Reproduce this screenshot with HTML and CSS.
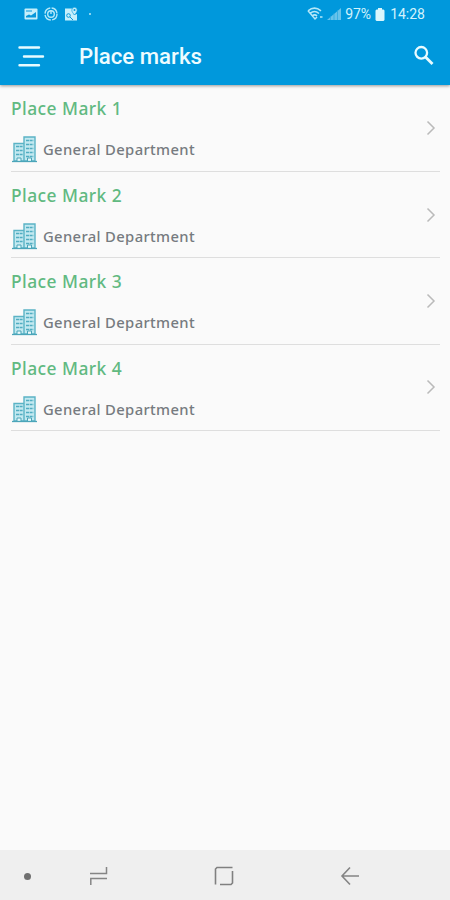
FILE: index.html
```html
<!DOCTYPE html>
<html lang="en">
<head>
    <meta charset="UTF-8">
    <meta name="viewport" content="width=device-width, initial-scale=1.0">
    <title>Place marks</title>
    <link rel="stylesheet" href="styles.css">
</head>
<body>

    <!-- Shared icons -->
    <svg class="icon-defs" width="0" height="0">
        <symbol id="building" viewBox="0 0 26 28">
            <path d="M2 26V8.500h10V26zM12 26V2h11v24z" fill="#c3e9f0" stroke="#5bb3c5" stroke-width="1.4"/>
            <path d="M4 11.500h7M4 15.500h7M4 19.500h7M14 5.500h7.500M14 9.500h7.500M14 13.500h7.500M14 17.500h7.500M14 21.500h7.500" stroke="#50adc1" stroke-width="1.4" stroke-dasharray="3 .6"/>
            <path d="M5 26v-3h4v3M15.500 26v-3h4v3" fill="#e8f8fa" stroke="#4ba5b9"/>
            <path d="M0 26.500h25" stroke="#4ba5b9" stroke-width="1.3"/>
        </symbol>
        <symbol id="chevron" viewBox="0 0 10 16">
            <path d="M1.500 1.500L8 8l-6.500 6.500" fill="none" stroke="#bababa" stroke-width="1.5"/>
        </symbol>
    </svg>

    <div class="screen">
        <header class="header">
            <div class="status-bar">
                <div class="status-left">
                    <svg width="14" height="12" viewBox="0 0 14 12">
                        <rect x=".5" y=".5" width="13" height="11" rx="1" fill="#c5effb"/>
                        <path d="M2 9.500V8l3-1.500 2 1 5-3.500v5.500zM2 2.500h6v1H2z" fill="#0798db"/>
                    </svg>
                    <svg width="14" height="14" viewBox="0 0 14 14" fill="none" stroke="#b5e9f9">
                        <circle cx="7" cy="7" r="6" stroke-width="1.4" stroke-dasharray="8 1.4"/>
                        <circle cx="7" cy="7" r="3.3" stroke-width="1.4"/>
                        <path d="M7 3v4" stroke-width="1.4"/>
                    </svg>
                    <svg width="14" height="14" viewBox="0 0 14 14">
                        <path d="M1 1.500h7l2 6.500 3-1v6.500H1z" fill="#c5effb"/>
                        <path d="M10.500 8C8.500 5.500 7.800 4.500 7.800 3a2.700 2.700 0 015.400 0c0 1.500-.7 2.500-2.700 5z" fill="#c5effb" stroke="#0798db" stroke-width=".6"/>
                        <circle cx="10.500" cy="3" r="1" fill="#0798db"/>
                        <circle cx="4.500" cy="8.500" r="1.800" fill="none" stroke="#0798db"/>
                        <path d="M6 10l3 3" stroke="#0798db"/>
                    </svg>
                    <span class="status-dot"></span>
                </div>
                <div class="status-right">
                    <svg width="18" height="14" viewBox="0 0 18 14" fill="none" stroke="#b5e7f8" stroke-width="1.5">
                        <path d="M1 3.800C5 .5 10 .5 14 3.800M3 6.500c3-2.600 6-2.600 9 0M5 9c2-1.600 3.500-1.600 5 0M1 3.800l7 8.200 2-2M13 10h2.500"/>
                    </svg>
                    <svg class="signal" width="14" height="12" viewBox="0 0 14 12">
                        <path d="M0 12L14 0v12z" fill="#68c3ea"/>
                        <path d="M3.500 8v4M7 5v7M10.500 2v10" stroke="#27a6df" stroke-width=".7"/>
                    </svg>
                    <span class="battery-text">97%</span>
                    <svg class="battery" width="10" height="13" viewBox="0 0 10 13">
                        <path d="M3 0h4v1.500h1.500l1 1V12l-1 1h-7l-1-1V2.500l1-1H3z" fill="#d9f6fd"/>
                    </svg>
                    <span class="clock">14:28</span>
                </div>
            </div>
            <div class="app-bar">
                <svg class="menu" width="28" height="22" viewBox="0 0 28 22" stroke="#e8fbff" stroke-width="2.4" stroke-linecap="round">
                    <path d="M2.500 1.500h19.500M7 10.500h19M2.500 19.300h19.500"/>
                </svg>
                <h1 class="title">Place marks</h1>
                <svg class="search" width="22" height="22" viewBox="0 0 22 22" fill="none" stroke="#e8fbff">
                    <circle cx="8.3" cy="7.8" r="5.8" stroke-width="2.3"/>
                    <path d="M12.500 12l7 7" stroke-width="2.8"/>
                </svg>
            </div>
        </header>

        <main class="list">
            <div class="item">
                <div class="info">
                    <h2 class="name">Place Mark 1</h2>
                    <div class="department">
                        <svg class="building"><use href="#building"/></svg>
                        <span>General Department</span>
                    </div>
                </div>
                <svg class="chevron"><use href="#chevron"/></svg>
            </div>
            <div class="item">
                <div class="info">
                    <h2 class="name">Place Mark 2</h2>
                    <div class="department">
                        <svg class="building"><use href="#building"/></svg>
                        <span>General Department</span>
                    </div>
                </div>
                <svg class="chevron"><use href="#chevron"/></svg>
            </div>
            <div class="item">
                <div class="info">
                    <h2 class="name">Place Mark 3</h2>
                    <div class="department">
                        <svg class="building"><use href="#building"/></svg>
                        <span>General Department</span>
                    </div>
                </div>
                <svg class="chevron"><use href="#chevron"/></svg>
            </div>
            <div class="item">
                <div class="info">
                    <h2 class="name">Place Mark 4</h2>
                    <div class="department">
                        <svg class="building"><use href="#building"/></svg>
                        <span>General Department</span>
                    </div>
                </div>
                <svg class="chevron"><use href="#chevron"/></svg>
            </div>
        </main>

        <!-- System navigation -->
        <nav class="nav-bar">
            <span class="nav-dot"></span>
            <svg class="recents" width="20" height="20" viewBox="0 0 20 20" fill="none" stroke="#858585" stroke-width="1.5">
                <path d="M1 7.500h16.500V1M18 12.500H1.800V19"/>
            </svg>
            <svg class="home" width="20" height="20" viewBox="0 0 20 20" fill="none" stroke="#808080" stroke-width="1.6">
                <path d="M1.500 18.500V3L3 1.500h15.500M6 18.500h11l1.500-1.500V5"/>
            </svg>
            <svg class="back" width="20" height="20" viewBox="0 0 20 20" fill="none" stroke="#858585" stroke-width="1.6">
                <path d="M10 1.500L2 10l8 8.500M2 10h17"/>
            </svg>
        </nav>
    </div>

</body>
</html>
```

FILE: styles.css
```css
* {
    box-sizing: border-box;
}

body {
    margin: 0;
    background-color: #fafafa;
    font-family: "Noto Sans", sans-serif;
}

h1, h2 {
    margin: 0;
}

svg {
    display: block;
    flex-shrink: 0;
}

.icon-defs {
    display: none;
}

.screen {
    height: 900px;
    display: flex;
    flex-direction: column;
}

/* Blue header with the status bar on top */
.header {
    height: 85px;
    background-color: #0098dc;
    box-shadow: 0 1px 3px rgba(0, 0, 0, 0.4);
    font-family: Roboto, sans-serif;
}

.status-bar {
    height: 28px;
    padding: 0 25px 0 24px;
    display: flex;
    justify-content: space-between;
    align-items: center;
    color: #d2f3fc;
    font-size: 14px;
}

.status-left,
.status-right {
    display: flex;
    align-items: center;
}

.status-left {
    gap: 6px;
}

.status-dot {
    width: 2px;
    height: 2px;
    margin-left: 5px;
    border-radius: 50%;
    background-color: #b5e9f9;
}

.signal {
    margin: 0 4px 0 2px;
}

.battery {
    margin: 0 5px 0 4px;
}

.app-bar {
    height: 57px;
    padding: 0 15px 0 17px;
    display: flex;
    align-items: center;
}

.title {
    flex: 1;
    margin-left: 34px;
    padding-bottom: 1px;
    color: #eefcff;
    font-size: 22.2px;
    font-weight: 500;
}

.search {
    margin-bottom: 1px;
}

/* Place mark rows */
.list {
    flex: 1;
    padding: 0 10px 0 11px;
}

.item {
    height: 86.4px;
    display: flex;
    justify-content: space-between;
    align-items: center;
    border-bottom: 1px solid #dedede;
}

.item:first-child {
    height: 87px;
}

.info {
    align-self: flex-start;
    padding-top: 11px;
}

.name {
    color: #61b981;
    font-size: 17.4px;
    line-height: 25px;
    font-weight: 500;
    letter-spacing: 0.45px;
}

.department {
    height: 28px;
    margin-top: 14px;
    padding-left: 1px;
    display: flex;
    align-items: center;
    gap: 5px;
    color: #767b80;
    font-size: 14.8px;
    font-weight: 500;
    letter-spacing: 0.35px;
}

.building {
    width: 26px;
    height: 28px;
}

.chevron {
    width: 10px;
    height: 16px;
    margin-right: 4px;
}

/* Bottom bar */
.nav-bar {
    height: 50px;
    padding: 2px 0 0 24px;
    display: flex;
    align-items: center;
    background-color: #efefef;
}

.nav-dot {
    width: 7px;
    height: 7px;
    border-radius: 50%;
    background-color: #707070;
}

.recents {
    margin-left: 58px;
}

.home {
    margin-left: 105px;
}

.back {
    margin-left: 106px;
}
```
